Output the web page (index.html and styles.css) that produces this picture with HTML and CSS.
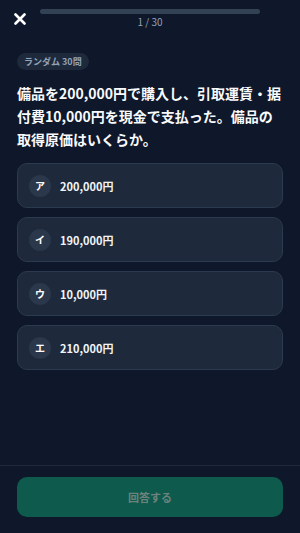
FILE: index.html
```html
<!DOCTYPE html>
<html lang="ja">
<head>
<meta charset="utf-8">
<title>クイズ</title>
<link rel="stylesheet" href="styles.css">
</head>
<body>
<div class="app">
	<div class="topbar">
		<button class="closeBtn" aria-label="閉じる">
			<svg width="12" height="12" viewBox="0 0 12 12"><path d="M1.5 1.5 L10.5 10.5 M10.5 1.5 L1.5 10.5" stroke="#fff" stroke-width="2.6" stroke-linecap="round"/></svg>
		</button>
		<div class="progress">
			<div class="track"><div class="fill" style="width:0%"></div></div>
			<div class="count">1 / 30</div>
		</div>
		<div></div>
	</div>

	<div class="main">
		<div class="tag">ランダム 30問</div>
		<p class="question">備品を200,000円で購入し、引取運賃・据付費10,000円を現金で支払った。備品の取得原価はいくらか。</p>

		<div class="choices">
			<div class="choice"><span class="mark">ア</span><span class="label">200,000円</span></div>
			<div class="choice"><span class="mark">イ</span><span class="label">190,000円</span></div>
			<div class="choice"><span class="mark">ウ</span><span class="label">10,000円</span></div>
			<div class="choice"><span class="mark">エ</span><span class="label">210,000円</span></div>
		</div>
	</div>

	<div class="footer">
		<button class="answerBtn" disabled>回答する</button>
	</div>
</div>
</body>
</html>
```
FILE: styles.css
```css
html, body{
	margin:0;
	padding:0;
	height:100%;
}

body{
	background-color:#0f172a;
	color:#f1f5f9;
	font-family:"Noto Sans CJK JP", "Noto Sans", sans-serif;
}

.app{
	display:flex;
	flex-direction:column;
	height:100%;
}

.topbar{
	display:grid;
	grid-template-columns:26px 1fr 26px;
	align-items:center;
	padding:9px 14px 0 14px;
}

.closeBtn{
	background:none;
	border:none;
	padding:0;
	width:12px;
	height:12px;
	display:flex;
	cursor:pointer;
}

.progress{
	display:flex;
	flex-direction:column;
	align-items:center;
}

.track{
	width:100%;
	height:5px;
	border-radius:3px;
	background-color:#334155;
	overflow:hidden;
}

.fill{
	height:100%;
	background-color:#10b981;
}

.count{
	margin-top:2px;
	font-size:10px;
	line-height:12px;
	color:#94a3b8;
}

.main{
	flex:1;
	padding:25px 17px 0 17px;
}

.tag{
	width:fit-content;
	height:17px;
	line-height:17px;
	padding:0 7px;
	border-radius:9px;
	background-color:#1e293b;
	color:#94a3b8;
	font-size:9px;
	font-weight:bold;
}

.question{
	margin:12px 0 0 0;
	font-size:14px;
	line-height:23px;
	font-weight:bold;
	color:#f8fafc;
}

.choices{
	margin-top:12px;
	display:flex;
	flex-direction:column;
	gap:9px;
}

.choice{
	display:flex;
	align-items:center;
	gap:9px;
	height:43px;
	padding:0 11px;
	border:1px solid #2c3a4f;
	border-radius:10px;
	background-color:#1e293b;
	cursor:pointer;
}

.mark{
	width:22px;
	height:22px;
	border-radius:50%;
	background-color:#2b374b;
	display:flex;
	align-items:center;
	justify-content:center;
	font-size:10px;
	font-weight:bold;
	color:#fff;
}

.label{
	font-size:11px;
	font-weight:bold;
	color:#f1f5f9;
}

.footer{
	border-top:1px solid #1e293b;
	padding:11px 17px 16px 17px;
}

.answerBtn{
	width:100%;
	height:40px;
	border:none;
	border-radius:10px;
	background-color:#0e5a4c;
	color:#6b827d;
	font-family:"Noto Sans CJK JP", sans-serif;
	font-size:11px;
	font-weight:bold;
}
```
